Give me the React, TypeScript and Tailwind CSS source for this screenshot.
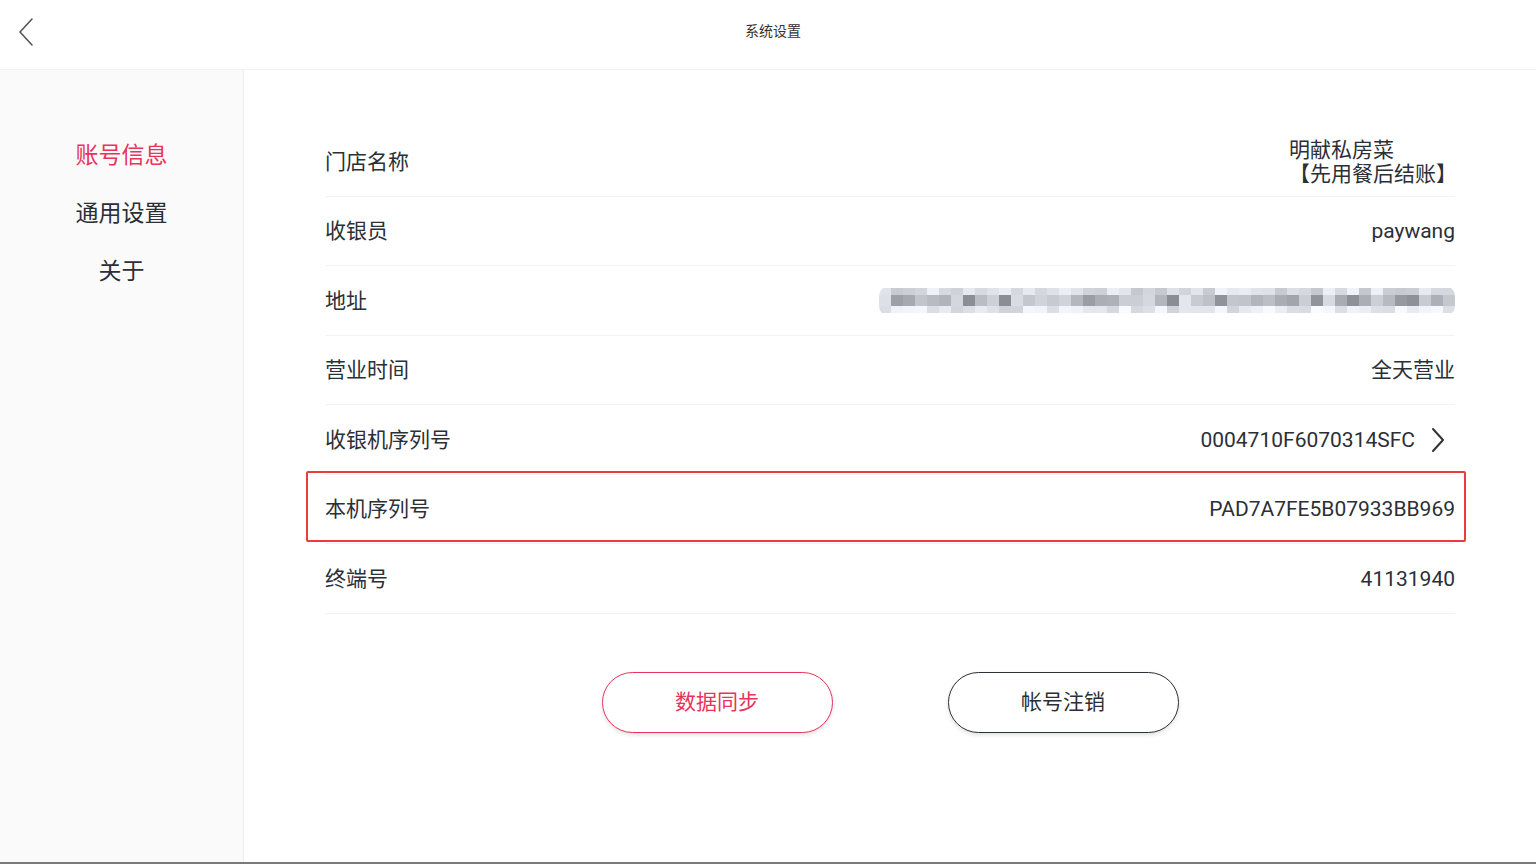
import React from 'react';

const FONT = 'font-[Roboto,"Noto_Sans_CJK_SC",sans-serif]';

interface InfoRow {
  label: string;
  value: React.ReactNode;
  arrow?: boolean;
}

function BlurredAddress() {
  // pixelated placeholder for the masked address
  const cols = 48;
  const cells: React.ReactNode[] = [];
  let seed = 11;
  const rand = () => {
    seed = (seed * 9301 + 49297) % 233280;
    return seed / 233280;
  };
  for (let c = 0; c < cols; c++) {
    for (let r = 0; r < 3; r++) {
      const base = r === 1 ? 135 : r === 0 ? 195 : 205;
      const spread = r === 1 ? 95 : 45;
      const v = Math.round(base + rand() * spread);
      cells.push(
        <rect
          key={`${c}-${r}`}
          x={c * 12}
          y={r === 0 ? 2 : r === 1 ? 9 : 20}
          width={12}
          height={r === 1 ? 11 : 7}
          fill={`rgb(${v},${v + 3},${v + 9})`}
        />,
      );
    }
  }
  return (
    <svg width="576" height="30" viewBox="0 0 576 30">
      <defs>
        <clipPath id="addr-clip">
          <rect x="0" y="0" width="576" height="30" rx="10" />
        </clipPath>
      </defs>
      <g clipPath="url(#addr-clip)">{cells}</g>
    </svg>
  );
}

export default function App() {
  const rows: InfoRow[] = [
    {
      label: '门店名称',
      value: (
        <div className="w-[166px] text-left leading-[24px]">
          <div>明献私房菜</div>
          <div>【先用餐后结账】</div>
        </div>
      ),
    },
    { label: '收银员', value: 'paywang' },
    { label: '地址', value: <BlurredAddress /> },
    { label: '营业时间', value: '全天营业' },
    { label: '收银机序列号', value: '0004710F6070314SFC', arrow: true },
    { label: '本机序列号', value: 'PAD7A7FE5B07933BB969' },
    { label: '终端号', value: '41131940' },
  ];

  const menu = ['账号信息', '通用设置', '关于'];

  return (
    <div className={`flex h-screen w-full flex-col bg-white text-[#2b2f36] ${FONT} border-b-2 border-[#7a7a7a]`}>
      <header className="relative flex h-[70px] shrink-0 items-center justify-center border-b border-[#f3f3f3] bg-white">
        <button className="absolute left-[14px] top-[14px] flex h-[36px] w-[24px] items-center justify-center">
          <svg width="18" height="32" viewBox="0 0 18 32" fill="none">
            <path d="M15 3 L3 16 L15 29" stroke="#555" strokeWidth="1.6" strokeLinecap="round" strokeLinejoin="round" />
          </svg>
        </button>
        <h1 className="-mt-[6px] ml-[10px] text-[14px] text-[#333]">系统设置</h1>
      </header>

      <div className="flex min-h-0 flex-1">
        <aside className="flex w-[244px] shrink-0 flex-col items-center border-r border-[#efefef] bg-[#fafafa] pt-[71px]">
          {menu.map((item, i) => (
            <div
              key={item}
              className={`h-[58px] text-[23px] leading-[30px] ${i === 0 ? 'text-[#e8345a]' : 'text-[#2b2f36]'}`}
            >
              {item}
            </div>
          ))}
        </aside>

        <main className="flex-1 px-[81px] pt-[57px]">
          <div className="relative">
            {rows.map((row) => (
              <div
                key={row.label}
                className="flex h-[69.5px] items-center justify-between border-b border-[#f3f3f3] pt-[2px] text-[21px]"
              >
                <span>{row.label}</span>
                <div className="flex items-center">
                  <span>{row.value}</span>
                  {row.arrow && (
                    <svg width="14" height="26" viewBox="0 0 14 26" fill="none" className="ml-[16px] mr-[10px]">
                      <path d="M2 2 L12 13 L2 24" stroke="#333" strokeWidth="2" strokeLinecap="round" strokeLinejoin="round" />
                    </svg>
                  )}
                </div>
              </div>
            ))}
            <div className="pointer-events-none absolute left-[-19px] right-[-11px] top-[344px] h-[71px] rounded-[2px] border-2 border-[#ec3b3b]" />
          </div>

          <div className="mt-[58px] flex justify-center gap-[115px]">
            <button className="h-[61px] w-[231px] rounded-full border border-[#e8345a] bg-white pt-[2px] text-[21px] text-[#e8345a] shadow-[0_2px_4px_rgba(0,0,0,0.12)]">
              数据同步
            </button>
            <button className="h-[61px] w-[231px] rounded-full border border-[#2b2f36] bg-white pt-[2px] text-[21px] text-[#2b2f36] shadow-[0_2px_4px_rgba(0,0,0,0.12)]">
              帐号注销
            </button>
          </div>
        </main>
      </div>
    </div>
  );
}
